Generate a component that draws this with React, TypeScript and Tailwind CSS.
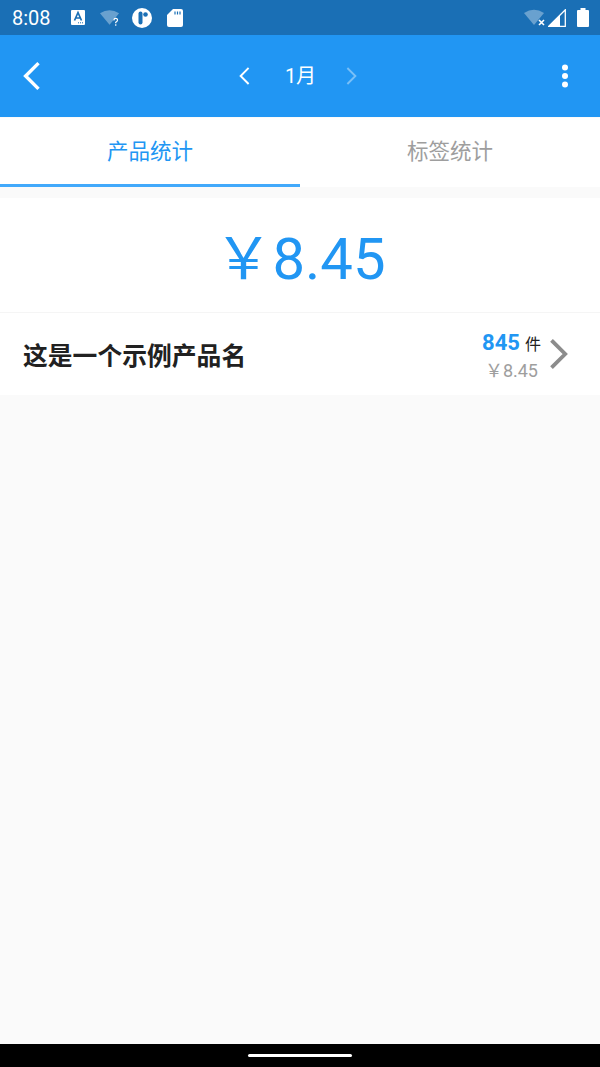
const fontStack = "font-['Roboto','Noto_Sans_CJK_SC',sans-serif]";

function Chevron({ dir, className, weight = 3.4 }: { dir: "left" | "right"; className: string; weight?: number }) {
  return (
    <svg viewBox="0 0 20 32" fill="none" className={className}>
      <path
        d={dir === "left" ? "M17 3 L4 16 L17 29" : "M3 3 L16 16 L3 29"}
        stroke="currentColor"
        strokeWidth={weight}
        strokeLinecap="square"
      />
    </svg>
  );
}

function StatusBar() {
  return (
    <div className="h-[35px] bg-[#1a6fb5] flex items-center text-white">
      <span className="ml-[12px] w-[39px] text-[20px] leading-none">8:08</span>
      <div className="ml-[20px] flex items-center">
        <svg viewBox="0 0 14 15" className="w-[14px] h-[15px]">
          <rect width="14" height="15" rx="1" fill="#fff" />
          <path d="M3.5 10.5 L7 2.5 L10.500 10.500 M5 8 H9" stroke="#1a6fb5" strokeWidth="1.7" fill="none" />
          <path d="M7 12.800 H12" stroke="#1a6fb5" strokeWidth="1" strokeDasharray="1 1" />
        </svg>
        <svg viewBox="0 0 22 18" className="ml-[15px] w-[21px] h-[18px]">
          <path d="M0 4 Q10 -2.500 20 4 L10 16 Z" fill="#fff" fillOpacity="0.35" />
          <path d="M14.500 11.500 Q14.700 9.500 16.500 9.500 Q18.500 9.500 18.300 11.500 Q18 12.700 16.500 13.500 V14.500 M16.500 15.500 V17" stroke="#fff" strokeWidth="1.300" fill="none" />
        </svg>
        <svg viewBox="0 0 20 20" className="ml-[11px] w-[20px] h-[20px]">
          <circle cx="10" cy="10" r="10" fill="#fff" />
          <rect x="6.500" y="3.500" width="4" height="13" rx="2" fill="#1a6fb5" />
          <circle cx="13.500" cy="6.500" r="2.300" fill="#1a6fb5" />
        </svg>
        <svg viewBox="0 0 16 18" className="ml-[15px] w-[16px] h-[18px]">
          <path d="M6 0 H14 Q16 0 16 2 V16 Q16 18 14 18 H2 Q0 18 0 16 V6 Z" fill="#fff" />
          <path d="M8 2.500 V5.500 M10.500 2.500 V5.500 M13 2.500 V5.500" stroke="#1a6fb5" strokeWidth="1.200" />
        </svg>
      </div>
      <div className="ml-auto mr-[11px] flex items-center">
        <svg viewBox="0 0 22 18" className="w-[22px] h-[18px]">
          <path d="M0 4 Q10 -2.500 20 4 L10 16 Z" fill="#fff" fillOpacity="0.35" />
          <path d="M15 11 L20 16 M20 11 L15 16" stroke="#fff" strokeWidth="1.600" />
        </svg>
        <svg viewBox="0 0 18 18" className="ml-[2px] w-[18px] h-[18px]">
          <path d="M0.800 17.300 L17.300 0.800 V17.300 Z" fill="#1a6fb5" stroke="#fff" strokeWidth="1.300" />
          <path d="M0 18 L12 6 V18 Z" fill="#fff" />
        </svg>
        <svg viewBox="0 0 12 19" className="ml-[11px] w-[12px] h-[19px]">
          <path d="M3.500 0 H8.500 V2 H11 Q12 2 12 3 V18 Q12 19 11 19 H1 Q0 19 0 18 V3 Q0 2 1 2 H3.500 Z" fill="#fff" />
        </svg>
      </div>
    </div>
  );
}

function Header() {
  return (
    <div className="h-[82px] bg-[#2196f3] flex items-center relative text-white">
      <Chevron dir="left" className="ml-[22px] w-[18px] h-[30px]" weight={3.8} />
      <div className="absolute left-0 right-[4px] top-0 bottom-0 flex items-center justify-center">
        <Chevron dir="left" className="w-[12px] h-[18px]" />
        <span className="ml-[35px] mr-[30px] text-[20px] leading-none">1月</span>
        <Chevron dir="right" className="w-[12px] h-[18px] text-white/40" />
      </div>
      <svg viewBox="0 0 8 24" className="ml-auto mr-[31px] w-[8px] h-[24px]" fill="currentColor">
        <circle cx="4" cy="3.500" r="3" />
        <circle cx="4" cy="12" r="3" />
        <circle cx="4" cy="20.500" r="3" />
      </svg>
    </div>
  );
}

function Tabs() {
  return (
    <div className="mt-px h-[69px] bg-white flex">
      <div className="flex-1 flex items-center justify-center text-[21.500px] text-[#2196f3] border-b-[3px] border-[#42a9fb] pt-[2px]">
        产品统计
      </div>
      <div className="flex-1 flex items-center justify-center text-[21.500px] text-[#9e9e9e] pb-[1px]">
        标签统计
      </div>
    </div>
  );
}

function ProductRow() {
  return (
    <div className="h-[82px] bg-white flex items-center pl-[23px] pr-[31px]">
      <span className="text-[24.800px] font-bold text-[#212121] pt-[5px]">这是一个示例产品名</span>
      <div className="ml-auto flex flex-col items-end pt-[4px]">
        <div className="flex items-baseline leading-none">
          <span className="text-[22px] font-bold text-[#2196f3]">845</span>
          <span className="ml-[5px] text-[16px] text-[#212121]">件</span>
        </div>
        <span className="mt-[8px] mr-[3px] text-[18px] leading-none text-[#9e9e9e]">￥8.45</span>
      </div>
      <Chevron dir="right" className="ml-[9px] w-[19px] h-[32px] text-[#8c8c8c]" weight={4} />
    </div>
  );
}

export default function App() {
  return (
    <div className={`w-[600px] h-[1067px] flex flex-col bg-[#fafafa] overflow-hidden ${fontStack}`}>
      <StatusBar />
      <Header />
      <Tabs />
      <div className="mt-[11px] h-[115px] bg-white flex items-center justify-center border-b border-[#f5f5f5] pt-[8px]">
        <span className="text-[58px] leading-none text-[#2196f3]">￥8.45</span>
      </div>
      <ProductRow />
      <div className="flex-1" />
      <div className="h-[23px] bg-black flex items-center justify-center">
        <div className="w-[104px] h-[3px] rounded-full bg-white" />
      </div>
    </div>
  );
}
